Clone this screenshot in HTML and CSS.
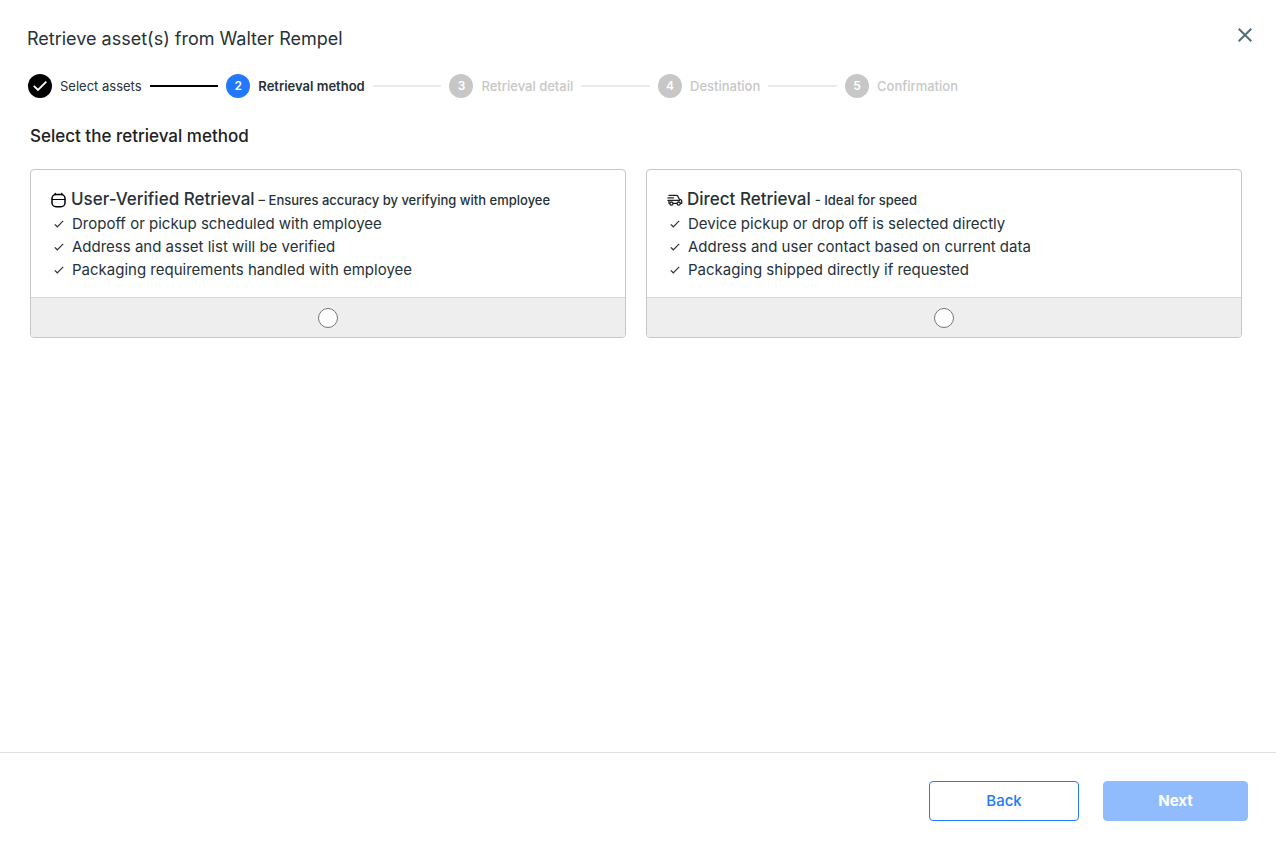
FILE: index.html
```html
<!DOCTYPE html>
<html lang="en">
<head>
  <meta charset="UTF-8" />
  <meta name="viewport" content="width=device-width, initial-scale=1.0"/>
  <title>Retrieve asset(s)</title>
  <link rel="stylesheet" href="styles.css">
</head>
<body>
  <header class="header">
    <h1>Retrieve asset(s) from Walter Rempel</h1>
    <button type="button" class="close" aria-label="Close">
      <svg width="14" height="14" viewBox="0 0 14 14" fill="none" stroke="#546e7a" stroke-width="2"><path d="M0.7 0.7L13.3 13.3M13.3 0.7L0.7 13.3"/></svg>
    </button>
  </header>

  <ol class="stepper">
    <li class="step done">
      <span class="dot">
        <svg width="24" height="24" viewBox="0 0 24 24" fill="none" stroke="#fff" stroke-width="1.8"><path d="M5.8 11.8L10 16L18.3 7.7"/></svg>
      </span>
      <span>Select assets</span>
    </li>
    <li class="line filled" aria-hidden="true"></li>
    <li class="step active" aria-current="step"><span class="dot">2</span><span>Retrieval method</span></li>
    <li class="line" aria-hidden="true"></li>
    <li class="step"><span class="dot">3</span><span>Retrieval detail</span></li>
    <li class="line" aria-hidden="true"></li>
    <li class="step"><span class="dot">4</span><span>Destination</span></li>
    <li class="line" aria-hidden="true"></li>
    <li class="step"><span class="dot">5</span><span>Confirmation</span></li>
  </ol>

  <main class="content">
    <h2>Select the retrieval method</h2>

    <div class="cards">
      <section class="card">
        <div class="card-body">
          <label class="card-title" for="userVerified">
            <svg class="icon" width="16" height="16" viewBox="0 0 16 16" fill="none" stroke="#000" stroke-width="1.5" stroke-linecap="round">
              <rect x="1" y="2.5" width="13" height="12.2" rx="4"/>
              <path d="M1 7.5H14" stroke-width="1.2"/>
              <path d="M4.2 1.4V2.6M10.8 1.4V2.6"/>
            </svg>
            <span class="name">User-Verified Retrieval</span>
            <span class="hint">– Ensures accuracy by verifying with employee</span>
          </label>
          <ul>
            <li><svg class="check" width="10" height="8" viewBox="0 0 10 8"><path d="M0.8 4.4L3.3 6.8L9.2 0.8"/></svg>Dropoff or pickup scheduled with employee</li>
            <li><svg class="check" width="10" height="8" viewBox="0 0 10 8"><path d="M0.8 4.4L3.3 6.8L9.2 0.8"/></svg>Address and asset list will be verified</li>
            <li><svg class="check" width="10" height="8" viewBox="0 0 10 8"><path d="M0.8 4.4L3.3 6.8L9.2 0.8"/></svg>Packaging requirements handled with employee</li>
          </ul>
        </div>
        <div class="card-footer">
          <input type="radio" id="userVerified" name="method" />
        </div>
      </section>

      <section class="card">
        <div class="card-body">
          <label class="card-title" for="direct">
            <svg class="icon" width="16" height="16" viewBox="0 0 16 16" fill="none" stroke="#212121" stroke-width="1.3" stroke-linecap="round" stroke-linejoin="round">
              <path d="M2 3.4H9.4Q10.3 3.4 10.8 4.2L12.2 7L14 7.8Q14.7 8.2 14.7 9V11.3H13.6M1 5.9H6.5M1 8.4H12.4M2 8.6V11.3H2.6M6.2 11.3H9.8"/>
              <circle cx="4.4" cy="11.6" r="1.6"/>
              <circle cx="11.7" cy="11.6" r="1.6"/>
            </svg>
            <span class="name">Direct Retrieval</span>
            <span class="hint">- Ideal for speed</span>
          </label>
          <ul>
            <li><svg class="check" width="10" height="8" viewBox="0 0 10 8"><path d="M0.8 4.4L3.3 6.8L9.2 0.8"/></svg>Device pickup or drop off is selected directly</li>
            <li><svg class="check" width="10" height="8" viewBox="0 0 10 8"><path d="M0.8 4.4L3.3 6.8L9.2 0.8"/></svg>Address and user contact based on current data</li>
            <li><svg class="check" width="10" height="8" viewBox="0 0 10 8"><path d="M0.8 4.4L3.3 6.8L9.2 0.8"/></svg>Packaging shipped directly if requested</li>
          </ul>
        </div>
        <div class="card-footer">
          <input type="radio" id="direct" name="method" />
        </div>
      </section>
    </div>
  </main>

  <footer class="footer">
    <button type="button" class="btn back">Back</button>
    <button type="button" class="btn next" disabled>Next</button>
  </footer>
</body>
</html>
```
FILE: styles.css
```css
* {
  box-sizing: border-box;
}

body {
  font-family: Inter, "Liberation Sans", sans-serif;
  margin: 0;
  min-height: 100vh;
  display: flex;
  flex-direction: column;
  background: #fff;
  color: #263238;
}

h1, h2, ul, ol {
  margin: 0;
  padding: 0;
  list-style: none;
}

.header {
  display: flex;
  justify-content: space-between;
  align-items: flex-start;
  padding: 26px 24px 0 27px;
}

h1 {
  font-size: 18px;
  line-height: 26px;
  font-weight: 400;
}

.close {
  display: flex;
  padding: 2px 0;
  border: none;
  background: none;
  cursor: pointer;
}

.stepper {
  display: flex;
  align-items: center;
  gap: 8px;
  max-width: 986px;
  padding: 22px 28px 0;
  font-size: 13px;
  line-height: 24px;
}

.step {
  display: flex;
  align-items: center;
  gap: 8px;
  color: #c7c7c7;
  font-weight: 500;
  white-space: nowrap;
}

.step.done {
  color: #263238;
  font-weight: 400;
}

.step.active {
  color: #263238;
  font-weight: 600;
}

.dot {
  width: 24px;
  height: 24px;
  border-radius: 50%;
  background: #c7c7c7;
  color: #fff;
  font-size: 12px;
  font-weight: 600;
  text-align: center;
}

.done .dot {
  background: #000;
}

.active .dot {
  background: #2279fd;
}

.dot svg {
  display: block;
}

.line {
  flex: 1;
  height: 2px;
  background: #e9e9ef;
}

.line.filled {
  background: #000;
}

.content {
  flex: 1;
  padding: 26px 34px 24px 30px;
}

h2 {
  font-size: 17px;
  line-height: 24px;
  font-weight: 500;
  color: #212121;
}

.cards {
  display: grid;
  grid-template-columns: 1fr 1fr;
  gap: 20px;
  margin-top: 21px;
}

.card {
  border: 1px solid #c7c7c7;
  border-radius: 4px;
  overflow: hidden;
}

.card-body {
  padding: 17px 20px 16px;
}

.card-title {
  display: flex;
  align-items: baseline;
  gap: 4px;
  line-height: 24px;
  font-weight: 500;
}

.icon {
  flex: none;
  align-self: center;
}

.name {
  font-size: 17px;
}

.hint {
  font-size: 13px;
}

.card li {
  display: flex;
  align-items: center;
  gap: 8px;
  padding-left: 3px;
  font-size: 15px;
  line-height: 23px;
}

.check {
  flex: none;
  fill: none;
  stroke: #263238;
  stroke-width: 1.2;
}

.card-footer {
  display: flex;
  justify-content: center;
  align-items: center;
  height: 40px;
  border-top: 1px solid #d6d6d6;
  background: #eee;
}

.card-footer input {
  width: 20px;
  height: 20px;
  margin: 0;
  appearance: none;
  border: 1px solid #767676;
  border-radius: 50%;
  background: #fff;
}

.card-footer input:checked {
  border: 6px solid #2279fd;
}

.footer {
  display: flex;
  justify-content: flex-end;
  gap: 24px;
  padding: 28px 28px 26px;
  border-top: 1px solid #dedede;
}

.btn {
  height: 40px;
  padding: 0 0 2px;
  border: 1px solid #2279fd;
  border-radius: 4px;
  font-family: inherit;
  font-size: 15px;
  cursor: pointer;
}

.back {
  width: 150px;
  background: #fff;
  color: #2279fd;
  font-weight: 500;
}

.next {
  width: 145px;
  border-color: #90bcfe;
  background: #90bcfe;
  color: #fff;
  font-weight: 700;
}
```
